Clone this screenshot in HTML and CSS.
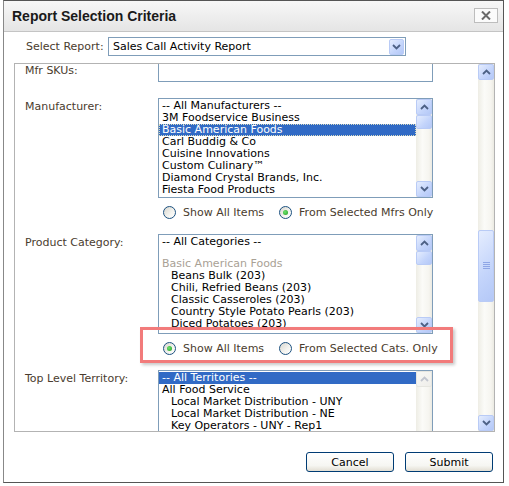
FILE: index.html
```html
<!DOCTYPE html>
<html lang="en">

<head>
    <meta charset="UTF-8">
    <meta name="viewport" content="width=device-width, initial-scale=1.0">
    <title>Report Selection Criteria</title>
    <link rel="stylesheet" href="styles.css">
</head>

<body>
    <div class="dialog">
        <div class="titlebar">
            <span class="title">Report Selection Criteria</span>
            <span class="close">
                <svg width="10" height="9" viewBox="0 0 10 9"><path d="M1 0.5 L9 8.5 M9 0.5 L1 8.5" stroke="#6a6a6a" stroke-width="2" fill="none"/></svg>
            </span>
        </div>

        <div class="report-row">
            <span class="report-label">Select Report:</span>
            <div class="combo">
                <span>Sales Call Activity Report</span>
                <span class="sbtn combo-btn">
                    <svg width="9" height="6" viewBox="0 0 9 6"><path d="M1 1 L4.5 4.5 L8 1" stroke="#4d6185" stroke-width="1.8" fill="none"/></svg>
                </span>
            </div>
        </div>

        <div class="panel">
            <div class="panel-view">
                <div class="panel-inner">
                    <div class="row row-sku">
                        <div class="row-label">Mfr SKUs:</div>
                        <div class="field sku-box"></div>
                    </div>

                    <div class="row">
                        <div class="row-label">Manufacturer:</div>
                        <div class="field">
                            <div class="listbox">
                                <div class="list-items">
                                    <div class="opt">-- All Manufacturers --</div>
                                    <div class="opt">3M Foodservice Business</div>
                                    <div class="opt sel focus">Basic American Foods</div>
                                    <div class="opt">Carl Buddig &amp; Co</div>
                                    <div class="opt">Cuisine Innovations</div>
                                    <div class="opt">Custom Culinary™</div>
                                    <div class="opt">Diamond Crystal Brands, Inc.</div>
                                    <div class="opt">Fiesta Food Products</div>
                                </div>
                                <div class="sbar">
                                    <span class="sbtn"><svg width="9" height="6" viewBox="0 0 9 6"><path d="M1 5 L4.5 1.5 L8 5" stroke="#4d6185" stroke-width="1.8" fill="none"/></svg></span>
                                    <span class="sbtn sthumb"></span>
                                    <span class="strack"></span>
                                    <span class="sbtn"><svg width="9" height="6" viewBox="0 0 9 6"><path d="M1 1 L4.5 4.5 L8 1" stroke="#4d6185" stroke-width="1.8" fill="none"/></svg></span>
                                </div>
                            </div>
                            <div class="radios">
                                <span class="radio"><span class="rb"></span>Show All Items</span>
                                <span class="radio"><span class="rb on"></span>From Selected Mfrs Only</span>
                            </div>
                        </div>
                    </div>

                    <div class="row">
                        <div class="row-label">Product Category:</div>
                        <div class="field">
                            <div class="listbox">
                                <div class="list-items">
                                    <div class="opt">-- All Categories --</div>
                                    <div class="opt group">Basic American Foods</div>
                                    <div class="opt sub">Beans Bulk (203)</div>
                                    <div class="opt sub">Chili, Refried Beans (203)</div>
                                    <div class="opt sub">Classic Casseroles (203)</div>
                                    <div class="opt sub">Country Style Potato Pearls (203)</div>
                                    <div class="opt sub">Diced Potatoes (203)</div>
                                </div>
                                <div class="sbar">
                                    <span class="sbtn"><svg width="9" height="6" viewBox="0 0 9 6"><path d="M1 5 L4.5 1.5 L8 5" stroke="#4d6185" stroke-width="1.8" fill="none"/></svg></span>
                                    <span class="sbtn sthumb"></span>
                                    <span class="strack"></span>
                                    <span class="sbtn"><svg width="9" height="6" viewBox="0 0 9 6"><path d="M1 1 L4.5 4.5 L8 1" stroke="#4d6185" stroke-width="1.8" fill="none"/></svg></span>
                                </div>
                            </div>
                            <div class="radios">
                                <span class="radio"><span class="rb on"></span>Show All Items</span>
                                <span class="radio"><span class="rb"></span>From Selected Cats. Only</span>
                            </div>
                        </div>
                    </div>

                    <div class="row">
                        <div class="row-label">Top Level Territory:</div>
                        <div class="field">
                            <div class="listbox">
                                <div class="list-items">
                                    <div class="opt sel">-- All Territories --</div>
                                    <div class="opt">All Food Service</div>
                                    <div class="opt sub">Local Market Distribution - UNY</div>
                                    <div class="opt sub">Local Market Distribution - NE</div>
                                    <div class="opt sub">Key Operators - UNY - Rep1</div>
                                </div>
                                <div class="sbar">
                                    <span class="sbtn off"><svg width="9" height="6" viewBox="0 0 9 6"><path d="M1 5 L4.5 1.5 L8 5" stroke="#c2c6cf" stroke-width="1.8" fill="none"/></svg></span>
                                    <span class="strack"></span>
                                </div>
                            </div>
                        </div>
                    </div>
                </div>

                <!-- annotation box drawn over the category options -->
                <div class="hilite"></div>
            </div>

            <div class="vscroll">
                <span class="sbtn"><svg width="9" height="6" viewBox="0 0 9 6"><path d="M1 5 L4.5 1.5 L8 5" stroke="#4d6185" stroke-width="1.8" fill="none"/></svg></span>
                <span class="strack">
                    <span class="sbtn big-thumb">
                        <svg width="7" height="8" viewBox="0 0 7 8"><path d="M0 0.5 H7 M0 2.5 H7 M0 4.5 H7 M0 6.5 H7" stroke="#8ea6e6" stroke-width="1" fill="none"/></svg>
                    </span>
                </span>
                <span class="sbtn"><svg width="9" height="6" viewBox="0 0 9 6"><path d="M1 1 L4.5 4.5 L8 1" stroke="#4d6185" stroke-width="1.8" fill="none"/></svg></span>
            </div>
        </div>

        <div class="buttons">
            <button class="btn">Cancel</button>
            <button class="btn">Submit</button>
        </div>
    </div>
</body>

</html>
```

FILE: styles.css
```css
* {
    box-sizing: border-box;
}

body {
    margin: 0;
    background: #fff;
    font-family: "DejaVu Sans", Verdana, sans-serif;
    font-size: 11px;
    color: #000;
}

.dialog {
    width: 501px;
    height: 483px;
    margin-left: 3px;
    border: 1px solid #555;
    border-left-color: #888;
    display: flex;
    flex-direction: column;
    background: #fff;
}

/* title bar */
.titlebar {
    flex: none;
    height: 31px;
    display: flex;
    justify-content: space-between;
    align-items: center;
    padding: 0 5px 0 8px;
    background: linear-gradient(#f7f7f7, #e5e5e5);
    border-bottom: 1px solid #c4c4c4;
}
.title {
    font-family: "Liberation Sans", Arial, sans-serif;
    font-weight: bold;
    font-size: 14px;
    color: #1a1a1a;
}
.close {
    align-self: flex-start;
    margin-top: 7px;
    width: 24px;
    height: 15px;
    border: 1px solid #bdbdbd;
    background: #fbfbfb;
    display: flex;
    align-items: center;
    justify-content: center;
}

/* report select */
.report-row {
    display: flex;
    align-items: center;
    margin-top: 5px;
    padding-left: 22px;
}
.report-label {
    width: 82px;
    color: #4a3c2e;
}
.combo {
    width: 298px;
    height: 19px;
    border: 1px solid #7f9db9;
    display: flex;
    align-items: center;
    justify-content: space-between;
    padding: 0 1px 0 4px;
}
.combo-btn {
    width: 15px;
    height: 15px;
}

/* scrolling panel */
.panel {
    margin: 7px 0 0 10px;
    width: 481px;
    height: 369px;
    border: 1px solid #b3b3b3;
    display: flex;
}
.panel-view {
    flex: 1;
    overflow: hidden;
    position: relative;
}
.panel-inner {
    margin-top: -2px;
    padding-left: 10px;
}
.row {
    display: flex;
    margin-bottom: 8px;
}
.row-sku {
    margin-bottom: 16px;
}
.row-label {
    width: 133px;
    flex: none;
    padding-top: 2px;
    line-height: 13px;
    color: #4a3c2e;
}
.field {
    width: 275px;
    flex: none;
}
.sku-box {
    height: 20px;
    border: 1px solid #7f9db9;
}

.listbox {
    height: 100px;
    border: 1px solid #7f9db9;
    display: flex;
}
.list-items {
    flex: 1;
    padding-top: 1px;
    overflow: hidden;
}
.opt {
    height: 12px;
    line-height: 12px;
    padding-left: 3px;
    white-space: nowrap;
}
.opt.sel {
    background: #316ac5;
    color: #fff;
}
.opt.focus {
    outline: 1px dotted #d9dcc0;
    outline-offset: -1px;
}
.opt.sub {
    padding-left: 12px;
}
.opt.group {
    margin-top: 10px;
    color: #a9a195;
}

/* xp style scroll bars */
.sbar,
.vscroll {
    width: 16px;
    flex: none;
    display: flex;
    flex-direction: column;
    background: linear-gradient(90deg, #eeede5, #fbfbf8 40%, #f6f5f0 80%, #ebeae2);
}
.sbtn {
    flex: none;
    height: 16px;
    display: flex;
    align-items: center;
    justify-content: center;
    border: 1px solid #b9cbf6;
    border-radius: 2px;
    background: linear-gradient(135deg, #e5edfe, #c3d4fb 60%, #b4c8f7);
}
.sbtn.off {
    border-color: #e6e6e0;
    background: linear-gradient(135deg, #f8f8f5, #efeeea);
}
.sthumb {
    height: 14px;
}
.strack {
    flex: 1;
}
.vscroll .strack {
    display: flex;
    flex-direction: column;
}
.big-thumb {
    margin-top: 150px;
    height: 72px;
}

.radios {
    height: 28px;
    display: flex;
    align-items: center;
    padding-left: 5px;
    color: #4a3c2e;
    white-space: nowrap;
}
.radio {
    flex: none;
    display: flex;
    align-items: center;
    gap: 7px;
    margin-right: 15px;
}
.radio:last-child {
    margin-right: 0;
}
.rb {
    position: relative;
    width: 13px;
    height: 13px;
    flex: none;
    border-radius: 50%;
    border: 1px solid #1c5180;
    background: linear-gradient(135deg, #d8d7cf, #f4f4f0 60%, #fff);
}
.rb.on::after {
    content: "";
    position: absolute;
    left: 3px;
    top: 3px;
    width: 5px;
    height: 5px;
    border-radius: 50%;
    background: radial-gradient(circle at 40% 40%, #6ee46e, #1f9c1f);
}

.hilite {
    position: absolute;
    left: 125px;
    top: 263px;
    width: 313px;
    height: 36px;
    border: 3px solid #f27b7b;
    box-shadow: 2px 2px 3px rgba(0, 0, 0, 0.22);
}

/* dialog buttons */
.buttons {
    display: flex;
    justify-content: flex-end;
    gap: 11px;
    margin-top: 20px;
    padding-right: 10px;
}
.btn {
    width: 88px;
    height: 20px;
    padding: 0;
    font-family: "DejaVu Sans", Verdana, sans-serif;
    font-size: 11px;
    color: #000;
    border: 1px solid #003c74;
    border-radius: 3px;
    background: linear-gradient(#ffffff, #f6f6f2 70%, #e2ded3);
}
```
